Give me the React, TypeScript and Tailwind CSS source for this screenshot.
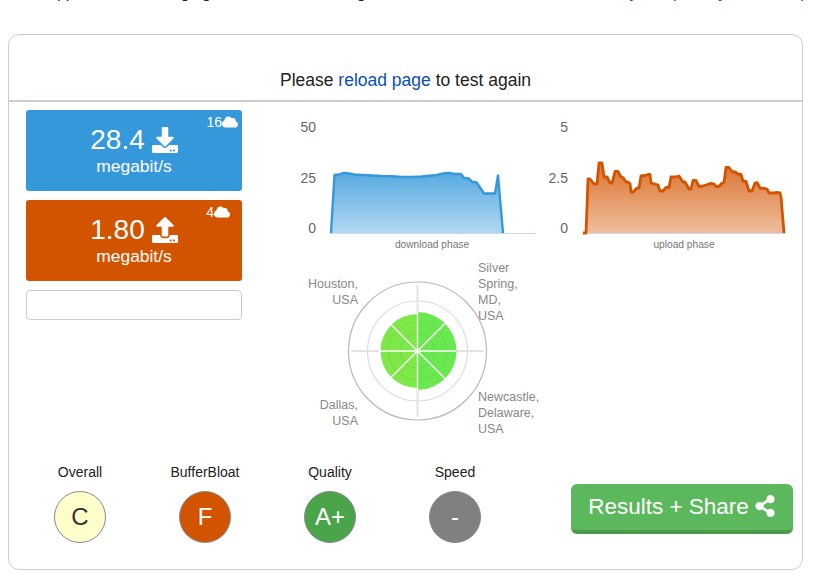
import { FaDownload, FaUpload, FaCloud, FaShareAlt } from "react-icons/fa";

const dl: [number, number][] = [[331,233],[334.5,175],[339,174.5],[344,173],[349,173.5],[354,174.5],[362,175],[372,175.5],[382,176],[392,176.2],[402,177],[412,177],[422,176.5],[432,175.5],[437,175],[443,173.5],[449,173],[455,174],[461,174],[464,178],[469,178.5],[472,182],[476,182],[479,186],[484,193.5],[488,193.5],[494,193.5],[495,193.5],[498,175.5],[503,233]];
const ul: [number, number][] = [[583,233],[586,233],[588,179],[590,179],[594,184],[597,184],[599,163],[602,163],[604,177],[607,177],[610,183],[612,183],[615,171.5],[618,171.5],[621,177],[623,177.5],[626,182],[628,182],[630,183.5],[631,192],[633,192],[637,188],[639,188],[641,176],[645,175.5],[648,174.5],[650,174.5],[651,183],[655,184],[658,185],[660,191],[663,191],[666,187.5],[669,187.5],[671,177],[675,177],[679,176],[683,182],[685,182],[689,189],[691,189],[693,180.5],[696,180.5],[699,186.5],[703,186],[706,185],[710,183.5],[714,184],[716,186.5],[719,186.5],[722,183],[724,182.5],[726,167.5],[729,167.5],[732,171.5],[735,172],[738,174],[741,174.5],[743,181],[746,181.5],[749,191],[752,191],[755,183],[757,182.5],[760,188],[765,188.5],[767,189],[769,193],[773,193],[777,192.5],[780,193],[781,197],[784,233]];
const pts = (a: [number, number][]) => a.map((p) => p.join(",")).join(" ");

function Chart({ top, mid, bottom, label, data, color, gid, width, offset, x1, x2, sw }: { top: string; mid: string; bottom: string; label: string; data: [number, number][]; color: string; gid: string; width: number; offset: number; x1: number; x2: number; sw: number }) {
  return (
    <div className="relative h-[148px] shrink-0" style={{ width }}>
      <svg width={width} height={148} viewBox={`${offset} 112 ${width} 148`} className="block">
        <defs>
          <linearGradient id={gid} x1="0" y1="0" x2="0" y2="1">
            <stop offset="0" stopColor={color} stopOpacity="0.82" />
            <stop offset="1" stopColor={color} stopOpacity="0.38" />
          </linearGradient>
        </defs>
        <line x1={x1} x2={x2} y1="233.5" y2="233.5" stroke="#ccd6eb" strokeWidth="1" />
        <polygon points={pts(data)} fill={`url(#${gid})`} />
        <polyline points={pts(data)} fill="none" stroke={color} strokeWidth={sw} strokeLinejoin="round" />
      </svg>
      <span className="absolute right-[calc(100%-26px)] top-[7px] text-[14px] leading-4 text-[#666666]">{top}</span>
      <span className="absolute right-[calc(100%-26px)] top-[58px] text-[14px] leading-4 text-[#666666]">{mid}</span>
      <span className="absolute right-[calc(100%-26px)] top-[108px] text-[14px] leading-4 text-[#666666]">{bottom}</span>
      <span className="absolute left-0 right-0 top-[127px] pl-[32px] text-center text-[10.2px] leading-3 text-[#777777]">{label}</span>
    </div>
  );
}

function Radar() {
  const cx = 417.5, cy = 351;
  return (
    <div className="relative h-[190px] w-[250px]">
      <svg width="250" height="190" viewBox="300 255 250 190" className="block">
        <circle cx={cx} cy={cy} r="69" fill="#fff" stroke="#b8b8b8" strokeWidth="1.2" />
        <circle cx={cx} cy={cy} r="50" fill="none" stroke="#dcdcdc" strokeWidth="1.2" />
        <g stroke="#e2e2e2" strokeWidth="2">
          <line x1={cx} y1={cy - 66} x2={cx} y2={cy + 66} />
          <line x1={cx - 66} y1={cy} x2={cx + 66} y2={cy} />
        </g>
        <path d={`M${cx} ${cy - 39}A39 39 0 0 1 ${cx} ${cy + 39}Z`} fill="#69e84f" />
        <path d={`M${cx} ${cy - 37}A37 37 0 0 0 ${cx} ${cy + 37}Z`} fill="#7de848" />
        <circle cx={cx} cy={cy} r="17" fill="none" stroke="#5ccc48" strokeOpacity="0.5" strokeWidth="1" />
        <circle cx={cx} cy={cy} r="29" fill="none" stroke="#5ccc48" strokeOpacity="0.35" strokeWidth="1" />
        <g stroke="#ffffff" strokeWidth="1.4">
          <line x1={cx} y1={cy - 39} x2={cx} y2={cy + 39} />
          <line x1={cx - 39} y1={cy} x2={cx + 39} y2={cy} />
          <line x1={cx - 27.5} y1={cy - 27.5} x2={cx + 27.5} y2={cy + 27.5} />
          <line x1={cx - 27.5} y1={cy + 27.5} x2={cx + 27.5} y2={cy - 27.5} />
        </g>
      </svg>
      <div className="absolute left-[178px] top-[5px] text-[12.5px] leading-4 text-[#888888]">Silver<br />Spring,<br />MD,<br />USA</div>
      <div className="absolute right-[192px] top-[21px] text-right text-[12.5px] leading-4 text-[#888888]">Houston,<br />USA</div>
      <div className="absolute left-[178px] top-[134px] text-[12.5px] leading-4 text-[#888888]">Newcastle,<br />Delaware,<br />USA</div>
      <div className="absolute right-[192px] top-[142px] text-right text-[12.5px] leading-4 text-[#888888]">Dallas,<br />USA</div>
    </div>
  );
}

function Speed({ value, icon, count, bg, right }: { value: string; icon: React.ReactNode; count: string; bg: string; right: string }) {
  return (
    <div className={`relative flex h-[81px] w-[216px] flex-col items-center rounded-[3px] pt-[13px] text-white ${bg}`}>
      <div className="flex h-[34px] items-center gap-[7px] text-[28px] leading-[34px]">{value}{icon}</div>
      <div className="-mt-[1px] text-[17.4px] leading-5">megabit/s</div>
      <div className={`absolute top-[2px] flex items-center text-[14px] leading-5 ${right}`}>{count}<FaCloud className="h-[16px] w-[16px]" /></div>
    </div>
  );
}

function Grade({ title, letter, cls, width }: { title: string; letter: string; cls: string; width: string }) {
  return (
    <div className={`flex flex-col items-center ${width}`}>
      <div className="text-[14px] leading-[18px] text-[#222222]">{title}</div>
      <div className={`mt-[10px] flex h-[52px] w-[52px] items-center justify-center rounded-full border border-[#888888] text-[24px] ${cls}`}>{letter}</div>
    </div>
  );
}

export default function App() {
  return (
    <div className="h-[579px] w-[829px] overflow-hidden bg-white font-['Liberation_Sans',Arial,sans-serif] text-[#222222]">
      <div className="-mt-[16px] h-[18px] overflow-hidden whitespace-nowrap pl-[16px] text-[16px] leading-[18px]">
        The applet is now changing the rate of the testing to what it should then be. <a className="text-[#0b4fb3]">The stability and primary controls open</a>
      </div>
      <div className="ml-[8px] mt-[32px] h-[536px] w-[795px] rounded-[11px] border border-[#cccccc]">
        <div className="flex h-[67px] items-end justify-center border-b-2 border-[#cccccc] pb-[10px] text-[17.5px] leading-5">
          <span>Please <a className="text-[#0b4fb3]">reload page</a> to test again</span>
        </div>
        <div className="flex">
          <div className="ml-[17px] mt-[8px] flex w-[216px] shrink-0 flex-col gap-[9px]">
            <Speed value="28.4" count="16" right="right-[4px]" bg="bg-[#3498db]" icon={<FaDownload className="h-[26px] w-[26px]" />} />
            <Speed value="1.80" count="4" right="right-[12px]" bg="bg-[#d35400]" icon={<FaUpload className="h-[26px] w-[26px]" />} />
            <div className="h-[30px] rounded-[4px] border border-[#cccccc]" />
          </div>
          <div className="ml-[48px] flex flex-col">
            <div className="mt-[10px] flex">
              <Chart top="50" mid="25" bottom="0" label="download phase" data={dl} color="#3498db" gid="gd" width={252} offset={290} x1={330} x2={536} sw={2.4} />
              <Chart top="5" mid="2.5" bottom="0" label="upload phase" data={ul} color="#d35400" gid="gu" width={252} offset={542} x1={582} x2={786} sw={2.8} />
            </div>
            <div className="ml-[10px] -mt-[5px]"><Radar /></div>
          </div>
        </div>
        <div className="ml-[27px] mt-[18px] flex items-start">
          <Grade title="Overall" letter="C" cls="bg-[#ffffcc] text-[#333333]" width="w-[88px]" />
          <Grade title="BufferBloat" letter="F" cls="bg-[#d35400] text-white" width="ml-[37px] w-[88px]" />
          <Grade title="Quality" letter="A+" cls="bg-[#4aa54a] text-white" width="ml-[37px] w-[88px]" />
          <Grade title="Speed" letter="-" cls="bg-[#808080] text-white" width="ml-[37px] w-[88px]" />
          <button className="ml-[72px] mt-[21px] flex h-[50px] w-[222px] items-start justify-center gap-[5px] rounded-[6px] border-b-[4px] border-[#4c9a4c] bg-[#5cb85c] pt-[8px] text-[22.5px] leading-[29px] text-white">
            Results + Share <FaShareAlt className="mt-[3px] h-[22px] w-[22px]" />
          </button>
        </div>
      </div>
    </div>
  );
}
